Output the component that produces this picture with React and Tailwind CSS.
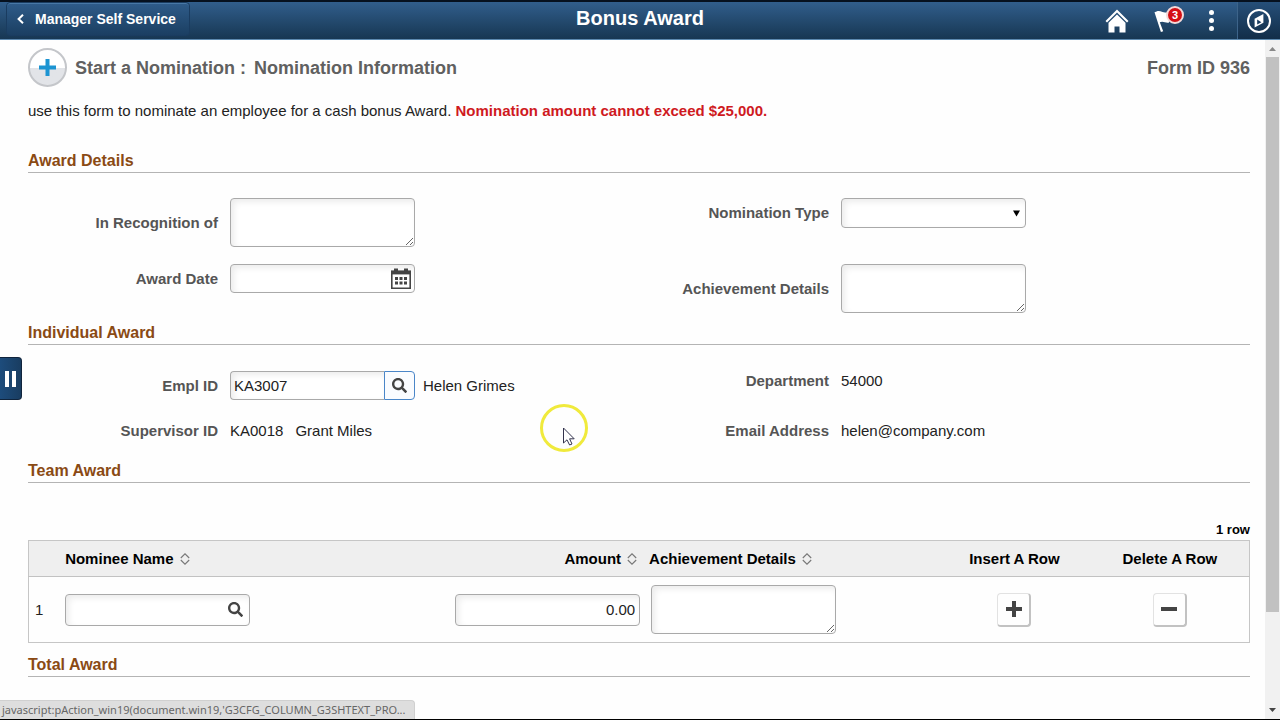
import { FaSearch } from "react-icons/fa";

const fieldClass =
  "rounded-sm border border-[#a9a9a9] bg-white text-[15px] text-[#222] shadow-[inset_3px_3px_6px_#ececec] outline-none";

const HomeIcon = () => (
  <svg width="24" height="24" viewBox="0 0 24 24" fill="#fff" aria-hidden="true">
    <path d="M12 0.5 L23.5 12 L22 13.4 L12 3.6 L2 13.4 L0.5 12 Z" />
    <path d="M12 5.5 L20.5 13.8 V23.5 H14.5 V17.5 H9.5 V23.5 H3.5 V13.8 Z" />
  </svg>
);

const FlagIcon = () => (
  <svg width="22" height="24" viewBox="0 0 22 24" fill="#fff" aria-hidden="true">
    <path d="M0.5 3.2 L2.6 2.4 C6 0.5 9 4.5 16 3.6 L15 13.5 C12 14.5 9 11.5 5.8 13.3 L9.2 22.2 L6.9 22.9 Z" />
  </svg>
);

const CompassIcon = () => (
  <svg width="26" height="26" viewBox="0 0 26 26" fill="none" stroke="#fff" aria-hidden="true">
    <circle cx="13" cy="13" r="11" strokeWidth="2" />
    <path d="M17.4 6 V14.8 L8.6 19.6 V10.8 Z" fill="#fff" stroke="none" />
    <path d="M11.2 11.6 L15.4 14.2 L11.2 16.6 Z" fill="#173a5e" stroke="none" />
  </svg>
);

const CalendarIcon = () => (
  <svg width="22" height="22" viewBox="0 0 22 22" aria-hidden="true">
    <path d="M1.8 4 V20.2 H20.2 V4" fill="#fff" stroke="#444" strokeWidth="1.6" />
    <rect x="1" y="2.4" width="20" height="4" fill="#444" />
    <rect x="4" y="0.5" width="4" height="3" fill="#444" />
    <rect x="14" y="0.5" width="4" height="3" fill="#444" />
    <path
      d="M5 10.5 h3 M9.5 10.5 h3 M14 10.5 h3 M5 15 h3 M9.5 15 h3 M14 15 h3"
      stroke="#444"
      strokeWidth="3"
    />
  </svg>
);

const SortIcon = () => (
  <svg width="10" height="14" viewBox="0 0 10 14" fill="none" stroke="#777" aria-hidden="true">
    <path d="M0.8 6 L5 1.8 L9.2 6 M0.8 8 L5 12.2 L9.2 8" strokeWidth="1.1" />
  </svg>
);

const SectionTitle = ({ children }) => (
  <h2 className="border-b border-[#b4b4b4] pb-px text-base leading-5 font-bold text-[#8a4a14]">
    {children}
  </h2>
);

const Row = ({ label, htmlFor, children }) => (
  <div className="flex items-center gap-3">
    <label htmlFor={htmlFor} className="w-[190px] shrink-0 text-right font-bold text-[#555]">
      {label}
    </label>
    {children}
  </div>
);

const SortHeader = ({ children }) => (
  <button type="button" className="inline-flex items-center gap-[6px] font-bold">
    {children}
    <SortIcon />
  </button>
);

const RowButton = ({ label, path }) => (
  <button
    type="button"
    aria-label={label}
    className="mx-auto flex size-[34px] items-center justify-center rounded-sm border border-[#e2e2e2] border-r-2 border-b-2 border-r-[#c2c2c2] border-b-[#c2c2c2]"
  >
    <svg width="16" height="16" viewBox="0 0 16 16" stroke="#444" strokeWidth="4" aria-hidden="true">
      <path d={path} />
    </svg>
  </button>
);

const Header = () => (
  <header className="grid h-10 shrink-0 grid-cols-[1fr_auto_1fr] border-t-2 border-b border-t-[#06111f] border-b-[#5d8ab0] bg-linear-to-b from-[#315e8c] to-[#173753] text-white">
    <div className="pl-[6px]">
      <button
        type="button"
        className="flex h-[34px] w-[184px] items-center gap-[11px] rounded-sm border border-[#1a3c60] bg-linear-to-b from-[#2f5c8a] to-[#1b3f62] pl-[10px] text-sm font-bold shadow-[inset_0_1px_0_#4878a6]"
      >
        <svg width="7" height="10" viewBox="0 0 7 10" fill="none" stroke="#fff" strokeWidth="2" aria-hidden="true">
          <path d="M6 0.8 L1.6 5 L6 9.2" />
        </svg>
        Manager Self Service
      </button>
    </div>
    <h1 className="text-xl leading-8 font-bold">Bonus Award</h1>
    <div className="flex items-center justify-end">
      <button type="button" aria-label="Home" className="mr-[25px]">
        <HomeIcon />
      </button>
      <button type="button" aria-label="Notifications" className="relative mr-[33px]">
        <FlagIcon />
        <span className="absolute -top-[3px] left-3 flex size-[18px] items-center justify-center rounded-full border-2 border-[#f3d9d9] bg-[#d40f14] text-[11px] font-bold">
          3
        </span>
      </button>
      <button type="button" aria-label="Actions" className="mr-[23px] flex flex-col gap-[3px]">
        <span className="size-[5px] rounded-full bg-white" />
        <span className="size-[5px] rounded-full bg-white" />
        <span className="size-[5px] rounded-full bg-white" />
      </button>
      <button
        type="button"
        aria-label="Navigator"
        className="flex h-full w-[43px] items-center justify-center border-l border-[#3d648a] bg-linear-to-b from-[#264f79] to-[#122e49]"
      >
        <CompassIcon />
      </button>
    </div>
  </header>
);

const NomineeTable = () => (
  <table className="w-full table-fixed border border-[#c6c6c6] text-[15px] leading-5">
    <thead className="bg-[#efefef] text-black">
      <tr className="h-9 border-b border-[#c2c2c2]">
        <th className="w-[3%]"></th>
        <th className="w-[28%] text-left"><SortHeader>Nominee Name</SortHeader></th>
        <th className="w-[19.5%] pr-2 text-right"><SortHeader>Amount</SortHeader></th>
        <th className="w-[24%] pl-1 text-left"><SortHeader>Achievement Details</SortHeader></th>
        <th className="w-[12.5%]">Insert A Row</th>
        <th>Delete A Row</th>
      </tr>
    </thead>
    <tbody>
      <tr className="h-[66px]">
        <td className="pl-[6px]">1</td>
        <td>
          <div className={`${fieldClass} flex h-8 w-[185px] items-center`}>
            <input aria-label="Nominee Name" className="min-w-0 flex-1 px-1 outline-none" />
            <button type="button" aria-label="Look up nominee" className="px-[6px] text-[#444]">
              <FaSearch size={15} />
            </button>
          </div>
        </td>
        <td className="pr-[5px]">
          <input
            aria-label="Amount"
            defaultValue="0.00"
            className={`${fieldClass} ml-auto block h-8 w-[185px] px-1 text-right`}
          />
        </td>
        <td className="pl-[6px]">
          <textarea aria-label="Achievement Details" className={`${fieldClass} block h-[49px] w-[185px]`} />
        </td>
        <td>
          <RowButton label="Insert row" path="M8 0 V16 M0 8 H16" />
        </td>
        <td>
          <RowButton label="Delete row" path="M0 8 H16" />
        </td>
      </tr>
    </tbody>
  </table>
);

const ScrollBar = () => (
  <div className="flex w-[15px] shrink-0 flex-col items-center bg-[#f1f1f1]" aria-hidden="true">
    <svg className="h-[17px] shrink-0" width="7" viewBox="0 0 7 17" fill="#888">
      <path d="M0 11 L3.5 7 L7 11 Z" />
    </svg>
    <div className="w-[13px] flex-[556] bg-[#c1c1c1]" />
    <div className="flex-[90]" />
    <svg className="h-[17px] shrink-0" width="7" viewBox="0 0 7 17" fill="#444">
      <path d="M0 6 L3.5 10 L7 6 Z" />
    </svg>
  </div>
);

export default function App() {
  return (
    <div className="relative flex min-h-screen flex-col border-b border-black bg-[#fefefe] font-['Liberation_Sans',Arial,sans-serif] text-[15px] leading-5 text-[#222]">
      <Header />

      <div className="flex flex-1">
        <main className="min-w-0 flex-1 pt-2 pr-[15px] pl-7">
          <div className="flex items-center text-lg font-bold text-[#606060]">
            <div className="mr-2 flex size-[39px] items-center justify-center rounded-full border-2 border-[#c4c6ca] bg-linear-to-b from-white from-50% to-[#e2e4e8] to-50%">
              <svg width="17" height="17" viewBox="0 0 17 17" stroke="#1c94d2" strokeWidth="4" aria-hidden="true">
                <path d="M8.5 0 V17 M0 8.5 H17" />
              </svg>
            </div>
            <span>Start a Nomination :</span>
            <span className="ml-2">Nomination Information</span>
            <span className="ml-auto">Form ID 936</span>
          </div>

          <p className="mt-[14px] mb-[30px]">
            use this form to nominate an employee for a cash bonus Award.{" "}
            <strong className="text-[#cf1a1f]">Nomination amount cannot exceed $25,000.</strong>
          </p>

          <SectionTitle>Award Details</SectionTitle>
          <div className="mt-[25px] mb-[10px] grid grid-cols-2 items-start gap-y-[17px]">
            <Row label="In Recognition of" htmlFor="recognition">
              <textarea id="recognition" className={`${fieldClass} block h-[49px] w-[185px]`} />
            </Row>
            <Row label="Nomination Type" htmlFor="type">
              <div className="relative">
                <select id="type" className={`${fieldClass} block h-[30px] w-[185px] appearance-none`}>
                  <option></option>
                </select>
                <svg
                  className="pointer-events-none absolute top-3 right-[6px]"
                  width="7"
                  height="7"
                  viewBox="0 0 7 7"
                  fill="#000"
                  aria-hidden="true"
                >
                  <path d="M0 0.5 H7 L3.5 6.5 Z" />
                </svg>
              </div>
            </Row>
            <Row label="Award Date" htmlFor="date">
              <div className={`${fieldClass} flex h-[29px] w-[185px] items-center`}>
                <input id="date" className="min-w-0 flex-1 px-1 outline-none" />
                <button type="button" aria-label="Choose date" className="mr-[2px]">
                  <CalendarIcon />
                </button>
              </div>
            </Row>
            <Row label="Achievement Details" htmlFor="achievement">
              <textarea id="achievement" className={`${fieldClass} block h-[49px] w-[185px]`} />
            </Row>
          </div>

          <SectionTitle>Individual Award</SectionTitle>
          <div className="mt-[26px] mb-5 grid grid-cols-2 items-start gap-y-[21px]">
            <Row label="Empl ID" htmlFor="empl">
              <div className="flex h-[29px] w-[185px]">
                <input
                  id="empl"
                  defaultValue="KA3007"
                  className={`${fieldClass} min-w-0 flex-1 rounded-r-none border-r-0 px-[3px]`}
                />
                <button
                  type="button"
                  aria-label="Look up employee"
                  className="flex w-[31px] items-center justify-center rounded-r-sm border border-[#4a86c8] bg-[#fafcff] text-[#444]"
                >
                  <FaSearch size={15} />
                </button>
              </div>
              <span className="-ml-1">Helen Grimes</span>
            </Row>
            <Row label="Department">
              <span>54000</span>
            </Row>
            <Row label="Supervisor ID">
              <span>KA0018</span>
              <span>Grant Miles</span>
            </Row>
            <Row label="Email Address">
              <span>helen@company.com</span>
            </Row>
          </div>

          <SectionTitle>Team Award</SectionTitle>
          <p className="mt-[37px] text-right text-[13px] leading-5 font-bold text-black">1 row</p>
          <NomineeTable />

          <div className="mt-3">
            <SectionTitle>Total Award</SectionTitle>
          </div>
        </main>
        <ScrollBar />
      </div>

      <button
        type="button"
        aria-label="Open side panel"
        className="absolute top-[357px] left-0 flex h-[43px] w-[22px] items-center gap-[3px] rounded-r-sm border border-l-0 border-[#10243c] bg-linear-to-r from-[#1d4c7c] to-[#193d61] pl-[5px]"
      >
        <span className="h-4 w-1 bg-white" />
        <span className="h-4 w-1 bg-white" />
      </button>

      <svg
        className="pointer-events-none absolute top-[403px] left-[539px]"
        width="50"
        height="50"
        viewBox="0 0 50 50"
        aria-hidden="true"
      >
        <circle cx="25" cy="25" r="22.5" fill="none" stroke="#f0ea3c" strokeWidth="3" />
        <path
          d="M24.5 25 V40 L28 36.8 L30.6 42 L33 41 L30.6 35.8 H35.2 Z"
          fill="#fff"
          stroke="#33334d"
        />
      </svg>

      <div className="absolute bottom-0 left-0 rounded-tr-sm border-t border-r border-[#d0d0d0] bg-[#dedede] pr-2 pl-[2px] font-['Noto_Sans',sans-serif] text-[11px] leading-[18px] text-[#666]">
        javascript:pAction_win19(document.win19,'G3CFG_COLUMN_G3SHTEXT_PRO...
      </div>
    </div>
  );
}
